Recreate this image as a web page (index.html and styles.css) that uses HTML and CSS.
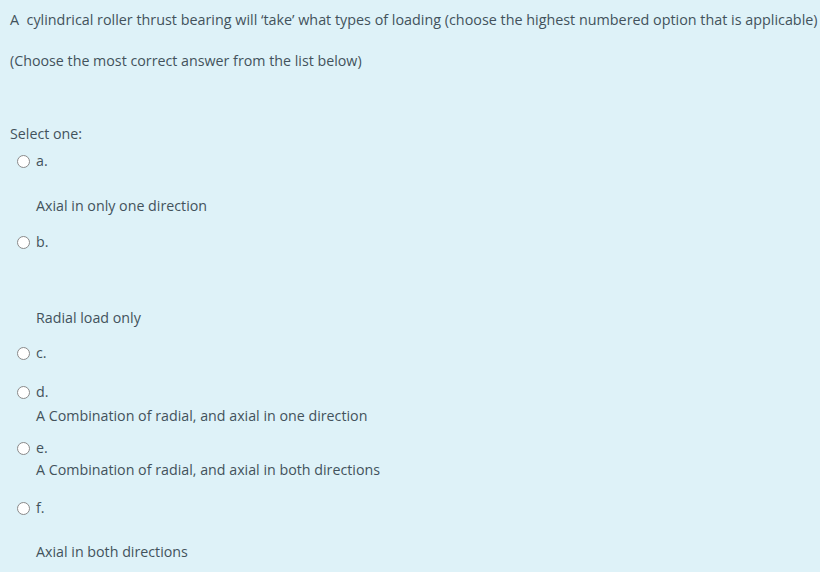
FILE: index.html
```html
<!DOCTYPE html>
<html lang="en">
<head>
<meta charset="utf-8">
<title>Question</title>
<link rel="stylesheet" href="styles.css">
</head>
<body>
<div class="que">
  <p class="qtext">A&nbsp; cylindrical roller thrust bearing will ‘take’ what types of loading (choose the highest numbered option that is applicable)</p>
  <p class="hint">(Choose the most correct answer from the list below)</p>
  <div class="prompt">Select one:</div>
  <div class="answer">
    <div class="choice mt-5"><span class="radio"></span><span class="num">a.</span></div>
    <p class="atext mt-23">Axial in only one direction</p>

    <div class="choice mt-14"><span class="radio"></span><span class="num">b.</span></div>
    <p class="atext mt-54">Radial load only</p>

    <div class="choice mt-13"><span class="radio"></span><span class="num">c.</span></div>

    <div class="choice mt-17"><span class="radio"></span><span class="num">d.</span></div>
    <p class="atext mt-2">A Combination of radial, and axial in one direction</p>

    <div class="choice mt-10"><span class="radio"></span><span class="num">e.</span></div>
    <p class="atext mt-0">A Combination of radial, and axial in both directions</p>

    <div class="choice mt-16"><span class="radio"></span><span class="num">f.</span></div>
    <p class="atext mt-22">Axial in both directions</p>
  </div>
</div>
</body>
</html>
```
FILE: styles.css
```css
html, body {
  margin: 0;
  padding: 0;
  background: #def2f8;
}
body {
  font-family: "Open Sans", "Noto Sans", sans-serif;
  font-size: 14.25px;
  color: #43525c;
  width: 820px;
  height: 572px;
  overflow: hidden;
}
.que {
  padding: 9px 0 0 10px;
}
p {
  margin: 0;
}
.qtext, .hint, .prompt, .choice, .atext {
  line-height: 22px;
  white-space: nowrap;
}
.qtext { font-size: 14.35px; }
.hint { margin-top: 19px; }
.prompt { margin-top: 51px; }
.choice {
  display: flex;
  align-items: center;
  padding-left: 7px;
}
.radio {
  width: 11px;
  height: 11px;
  border: 1px solid #8a8a8a;
  border-radius: 50%;
  background: #fff;
  box-sizing: content-box;
}
.num {
  margin-left: 6px;
}
.atext {
  padding-left: 26px;
}
.mt-0 { margin-top: 0; }
.mt-2 { margin-top: 2px; }
.mt-5 { margin-top: 5px; }
.mt-10 { margin-top: 10px; }
.mt-13 { margin-top: 13px; }
.mt-14 { margin-top: 14px; }
.mt-16 { margin-top: 16px; }
.mt-17 { margin-top: 17px; }
.mt-22 { margin-top: 22px; }
.mt-23 { margin-top: 23px; }
.mt-54 { margin-top: 54px; }
```
